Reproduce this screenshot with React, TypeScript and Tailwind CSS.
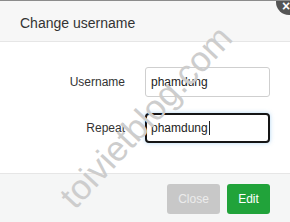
import React from "react";

export default function App() {
  return (
    <div
      className="relative w-[290px] h-[222px] overflow-hidden bg-white flex flex-col border-t border-[#8c8c8c]"
      style={{ fontFamily: '"Liberation Sans", Arial, sans-serif' }}
    >
      <div className="h-[41px] shrink-0 bg-[#f7f7f7] border-b border-[#e6e6e6] flex items-center pl-[20px] pt-[5px]">
        <span className="text-[14px] text-[#333]">Change username</span>
      </div>

      <div className="flex-1 flex flex-col pt-[25px] gap-[16px]">
        <div className="flex items-center">
          <label className="w-[125px] text-right text-[12px] text-[#333]">Username</label>
          <div className="ml-[20px] w-[125px] h-[30px] border border-[#cfcfcf] rounded-[3px] flex items-center pl-[5px] text-[12px] text-[#222] bg-white">
            phamdung
          </div>
        </div>
        <div className="flex items-center">
          <label className="w-[125px] text-right text-[12px] text-[#333]">Repeat</label>
          <div className="ml-[20px] w-[125px] h-[30px] border-2 border-[#151515] rounded-[4px] flex items-center pl-[4px] text-[12px] text-[#222] bg-white shadow-[0_0_4px_rgba(102,175,233,0.5)]">
            phamdung
            <span className="inline-block w-px h-[14px] bg-[#222] ml-px" />
          </div>
        </div>
      </div>

      <div className="h-[49px] shrink-0 bg-[#f5f6f6] border-t border-[#e6e6e6] flex items-center justify-end gap-[7px] pr-[20px] pt-[1px]">
        <button className="h-[30px] w-[53px] rounded-[3px] bg-[#c8c8c8] text-[12px] text-[#ececec]">
          Close
        </button>
        <button className="h-[30px] w-[43px] rounded-[3px] bg-[#21a33a] text-[12px] text-white">
          Edit
        </button>
      </div>

      <div className="absolute left-[276px] top-[-12px] w-[26px] h-[26px] rounded-full bg-[#555] flex items-center justify-center">
        <span className="text-white text-[14px] leading-none font-bold translate-x-[-3px] translate-y-[4px]">×</span>
      </div>

      <div
        className="pointer-events-none absolute left-[146px] top-[116px] -translate-x-1/2 -translate-y-1/2 -rotate-[47deg] whitespace-nowrap text-[35px] text-[#cdcdcd]"
      >
        toivietblog.com
      </div>
    </div>
  );
}
